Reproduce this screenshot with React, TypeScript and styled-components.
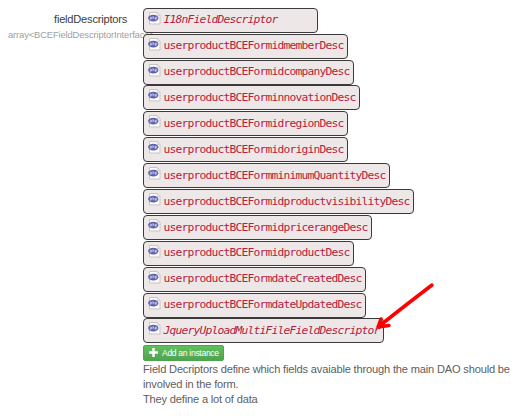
import React from "react";
import styled, { createGlobalStyle } from "styled-components";

const GlobalStyle = createGlobalStyle`
  * { box-sizing: border-box; }
  body { margin: 0; background: #fff; overflow: hidden; }
`;

const Page = styled.main`
  position: relative;
  display: flex;
  width: 531px;
  height: 416px;
  padding-top: 7.8px;
  font-family: "Liberation Sans", Arial, sans-serif;
  color: #606060;
`;

const LabelColumn = styled.div`
  width: 127px;
  margin-right: 16px;
  flex: none;
  padding-top: 2.8px;
  text-align: right;
  white-space: nowrap;
`;

const Label = styled.div`
  font-size: 11.1px;
  letter-spacing: -0.22px;
  line-height: 17px;
  color: #3c3c3c;
`;

const TypeHint = styled.div`
  margin-left: 8px;
  text-align: left;
  font-size: 9.4px;
  letter-spacing: -0.13px;
  line-height: 14px;
  color: #a0a0a0;
`;

const Controls = styled.div`
  position: relative;
  display: flex;
  flex-direction: column;
  align-items: flex-start;
  width: 380px;
`;

const InstanceList = styled.div`
  display: flex;
  flex-direction: column;
  align-items: flex-start;
  gap: 0.9px;
`;

const Instance = styled.div<{ $width: number; $italic?: boolean }>`
  display: flex;
  width: ${(p) => p.$width}px;
  height: 25px;
  padding: 3px 0 0 4px;
  border: 1px solid #3c3a3b;
  border-radius: 4px;
  background: #ede7e7;
  font: ${(p) => (p.$italic ? "italic" : "normal")} 11.3px/16px "DejaVu Sans Mono", monospace;
  letter-spacing: -0.8px;
  white-space: nowrap;
  color: #b5213f;
`;

const InstanceName = styled.span`
  margin: 0.6px 0 0 2.5px;
`;

const AddButton = styled.button`
  display: flex;
  align-items: center;
  gap: 4px;
  width: 81px;
  height: 16px;
  margin-top: 1.2px;
  padding: 0 0 0 5px;
  border: 1px solid #4ea34e;
  border-radius: 2px;
  background: linear-gradient(#60bf60, #51a351);
  color: #fff;
  font: 8.5px/14px "Liberation Sans", Arial, sans-serif;
  letter-spacing: -0.28px;
  white-space: nowrap;
`;

const Help = styled.p`
  margin: 0;
  padding-top: 1.2px;
  font-size: 11.1px;
  letter-spacing: -0.18px;
  line-height: 15px;
  white-space: nowrap;
`;

const Arrow = styled.svg`
  position: absolute;
  left: 370px;
  top: 278px;
`;

const Icon = styled.svg`
  flex: none;
  display: block;
`;

const PhpIcon = () => (
  <Icon width="13" height="14" viewBox="0 0 13 14">
    <path d="M1.5 .5h7.8l2.7 2.7v8.8H1.5z" fill="#fcfcfc" stroke="#c7c3c5" />
    <path d="M9.2 .7v2.7H12" fill="#eee" stroke="#c7c3c5" strokeWidth=".7" />
    <ellipse cx="5.3" cy="6.1" rx="5.2" ry="3.3" fill="#5d60ad" />
    <path
      d="M2.3 7.9V5.2h1.2v1.7H2.3M4.9 4.2v3M4.9 5.3h1.2v1.8M7.5 7.9V5.2h1.2v1.7H7.5"
      fill="none"
      stroke="#d6d7ed"
      strokeWidth=".7"
    />
  </Icon>
);

const PlusIcon = () => (
  <Icon width="9" height="9" viewBox="0 0 9 9">
    <path d="M4.5 .1v8.8M.1 4.5h8.8" stroke="#fff" strokeWidth="2.4" />
  </Icon>
);

const instances = [
  { name: "I18nFieldDescriptor", width: 175, italic: true },
  { name: "userproductBCEFormidmemberDesc", width: 205 },
  { name: "userproductBCEFormidcompanyDesc", width: 211 },
  { name: "userproductBCEForminnovationDesc", width: 217 },
  { name: "userproductBCEFormidregionDesc", width: 205 },
  { name: "userproductBCEFormidoriginDesc", width: 205 },
  { name: "userproductBCEFormminimumQuantityDesc", width: 247 },
  { name: "userproductBCEFormidproductvisibilityDesc", width: 271 },
  { name: "userproductBCEFormidpricerangeDesc", width: 229 },
  { name: "userproductBCEFormidproductDesc", width: 211 },
  { name: "userproductBCEFormdateCreatedDesc", width: 223 },
  { name: "userproductBCEFormdateUpdatedDesc", width: 223 },
  { name: "JqueryUploadMultiFileFieldDescriptor", width: 241, italic: true },
];

export default function App() {
  return (
    <Page>
      <GlobalStyle />
      <LabelColumn>
        <Label>fieldDescriptors</Label>
        <TypeHint>array&lt;BCEFieldDescriptorInterface&gt;</TypeHint>
      </LabelColumn>
      <Controls>
        <InstanceList>
          {instances.map((item) => (
            <Instance key={item.name} $width={item.width} $italic={item.italic}>
              <PhpIcon />
              <InstanceName>{item.name}</InstanceName>
            </Instance>
          ))}
        </InstanceList>
        <AddButton>
          <PlusIcon />
          Add an instance
        </AddButton>
        <Help>
          Field Decriptors define which fields avaiable through the main DAO should be
          <br />
          involved in the form.
          <br />
          They define a lot of data
        </Help>
      </Controls>
      <Arrow width="70" height="60" viewBox="370 278 70 60">
        <path
          d="M432 285L406 305L378 327M381 319L378 327L389 325.5"
          fill="none"
          stroke="#f00"
          strokeWidth="3.5"
          strokeLinecap="round"
          strokeLinejoin="round"
        />
      </Arrow>
    </Page>
  );
}
